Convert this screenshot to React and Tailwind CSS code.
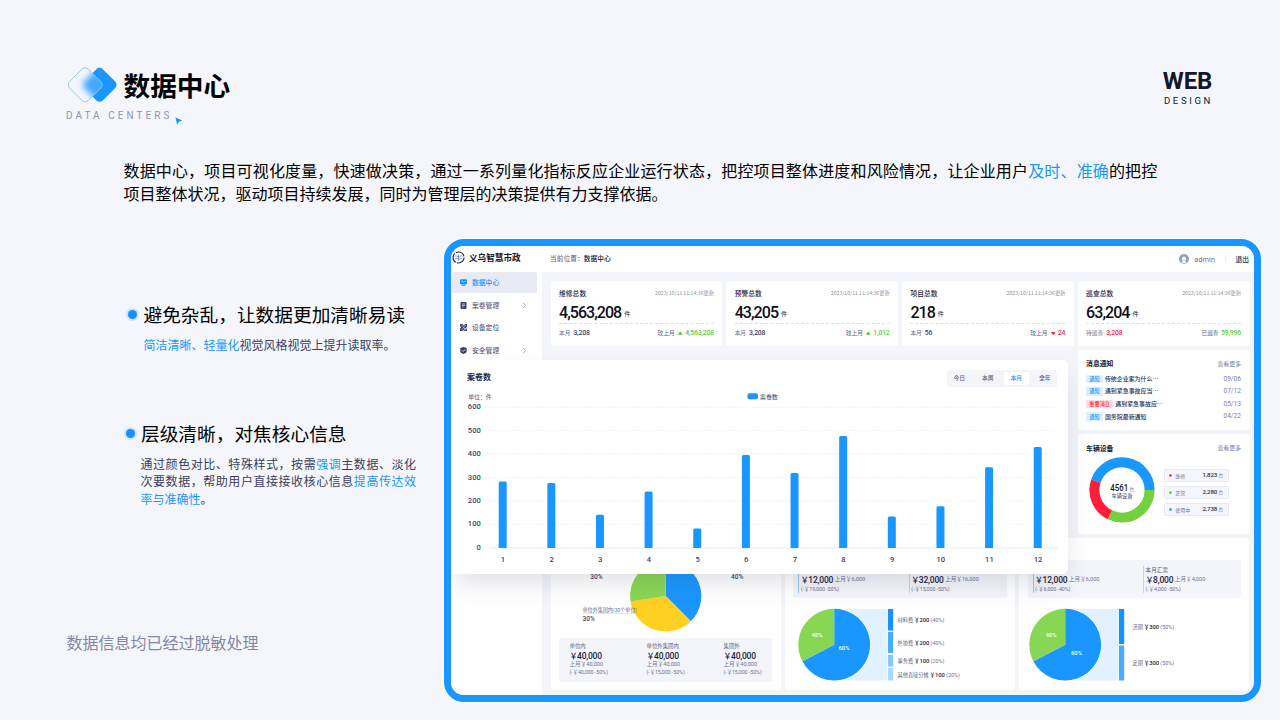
import React from "react";
import { ChevronRight } from "lucide-react";

const navItems = [
    { label: "数据中心", icon: "monitor", active: true },
    { label: "案卷管理", icon: "file", arrow: true },
    { label: "设备定位", icon: "device" },
    { label: "安全管理", icon: "shield", arrow: true },
];

const stats = [
    { title: "维修总数", value: "4,563,208", left: "本月", leftValue: "3,208", right: "较上月", rightValue: "4,563,208", trend: "up" },
    { title: "预警总数", value: "43,205", left: "本月", leftValue: "3,208", right: "较上月", rightValue: "1,012", trend: "up" },
    { title: "项目总数", value: "218", left: "本月", leftValue: "56", right: "较上月", rightValue: "24", trend: "down" },
    { title: "巡查总数", value: "63,204", left: "待巡查", leftValue: "3,208", right: "已巡查", rightValue: "59,996", alert: true },
];

const notices = [
    { tag: "通知", text: "传统企业家为什么⋯", date: "09/06" },
    { tag: "通知", text: "遇到紧急事故应当⋯", date: "07/12" },
    { tag: "重要消息", text: "遇到紧急事故应⋯", date: "05/13", urgent: true },
    { tag: "通知", text: "国务院最新通知", date: "04/22" },
];

const vehicles = [
    { label: "维修", value: "1,823", dot: "#ff1f3d" },
    { label: "正常", value: "2,280", dot: "#52c41a" },
    { label: "使用中", value: "2,738", dot: "#1890ff" },
];

const monthly = [283, 277, 141, 240, 82, 396, 319, 477, 134, 177, 344, 430];
const tabs = ["今日", "本周", "本月", "全年"];

const unitTotals = [
    { label: "单位内", diff: "(-￥40,000 -50%)" },
    { label: "单位外集团内", diff: "(-￥15,000 -50%)" },
    { label: "集团外", diff: "(-￥15,000 -50%)" },
];

// Angles are in degrees, clockwise from 12 o'clock
function point(cx, cy, r, deg) {
    const a = ((deg - 90) * Math.PI) / 180;
    return `${(cx + r * Math.cos(a)).toFixed(2)} ${(cy + r * Math.sin(a)).toFixed(2)}`;
}

function slice(cx, cy, r, from, to) {
    return `M${cx} ${cy}L${point(cx, cy, r, from)}A${r} ${r} 0 ${to - from > 180 ? 1 : 0} 1 ${point(cx, cy, r, to)}Z`;
}

function arc(cx, cy, r, from, to) {
    return `M${point(cx, cy, r, from)}A${r} ${r} 0 ${to - from > 180 ? 1 : 0} 1 ${point(cx, cy, r, to)}`;
}

function BrandMark() {
    return (
        <svg width="52" height="38" viewBox="0 0 52 38">
            <defs>
                <clipPath id="front">
                    <rect x="5.900" y="5.500" width="26.600" height="26.600" rx="4.500" transform="rotate(45 19.200 18.800)" />
                </clipPath>
                <filter id="soft" x="-50%" y="-50%" width="200%" height="200%">
                    <feGaussianBlur stdDeviation="3" />
                </filter>
            </defs>
            <rect x="20.300" y="5.500" width="26.600" height="26.600" rx="4.500" transform="rotate(45 33.600 18.800)" fill="#1a96ff" />
            <g clipPath="url(#front)">
                <rect width="40" height="38" fill="#f4f6fb" />
                <rect x="20.300" y="5.500" width="26.600" height="26.600" rx="4.500" transform="rotate(45 33.600 18.800)" fill="#44a9ff" filter="url(#soft)" />
            </g>
            <rect x="5.900" y="5.500" width="26.600" height="26.600" rx="4.500" transform="rotate(45 19.200 18.800)" fill="none" stroke="#7cc3ff" strokeWidth="0.8" />
        </svg>
    );
}

function NavIcon({ name }) {
    return (
        <svg width="7" height="7" viewBox="0 0 14 14" fill="#3d426b">
            {name === "monitor" && (
                <g fill="#1890ff">
                    <rect x="0" y="0.5" width="14" height="10" rx="2" />
                    <rect x="3" y="11" width="8" height="2.5" rx="1" />
                    <path d="M3 5l2-1.500 2 3.500 2-2h2" stroke="#fff" strokeWidth="1.200" fill="none" />
                </g>
            )}
            {name === "file" && (
                <g>
                    <rect x="1" y="0" width="12" height="14" rx="1.500" />
                    <path d="M4 4h6M4 7h6M4 10h3" stroke="#fff" strokeWidth="1.200" />
                </g>
            )}
            {name === "device" && (
                <g>
                    <path d="M0 0h5l3 4 2-4h4v5l-2 3 2 3v3H9L7 12l-2 2H0V9l2-2-2-3z" />
                    <path d="M2 1l10 12M12 2L3 12" stroke="#fff" strokeWidth="0.900" />
                    <circle cx="10" cy="9.500" r="1.500" fill="#fff" />
                </g>
            )}
            {name === "shield" && (
                <g>
                    <path d="M7 0l6.500 2v6c0 3-3 5-6.500 6C3.500 13 .5 11 .5 8V2z" />
                    <path d="M4 6.500l2.500 2.500L10.500 5" stroke="#fff" strokeWidth="1.500" fill="none" />
                </g>
            )}
        </svg>
    );
}

function Sidebar() {
    return (
        <aside className="w-[91px] shrink-0 bg-white">
            <div className="flex h-[26px] items-center gap-[4px] pb-[3px] pl-[1px]">
                <svg width="13" height="13" viewBox="0 0 26 26" fill="none" stroke="#1d2560">
                    <circle cx="13" cy="13" r="11" strokeWidth="2.300" strokeDasharray="20 2.500" />
                    <path d="M5 11c4-4 7 3 11 0 2-2 4-2 5 0M5 16c5-3 8 2 15-1" stroke="#5b78b8" strokeWidth="1.500" />
                    <path d="M13 7v12" stroke="#6e7ba8" strokeWidth="1.500" />
                </svg>
                <span className="text-[8.6px] font-bold leading-none text-[#14162b]">义乌智慧市政</span>
            </div>
            <nav className="flex flex-col gap-[2.2px] pl-px pr-[5px]">
                {navItems.map((item) => (
                    <div
                        key={item.label}
                        className={
                            item.active
                                ? "flex h-[20.6px] items-center rounded-[2.5px] bg-[#e8eaf4] px-[8px] text-[#1890ff]"
                                : "flex h-[20.6px] items-center px-[8px] text-[#5a5e80]"
                        }
                    >
                        <NavIcon name={item.icon} />
                        <span className="ml-[5px] flex-1 text-[6.8px] font-medium leading-none">{item.label}</span>
                        {item.arrow && <ChevronRight size={9} strokeWidth={2} className="text-[#8c90ac]" />}
                    </div>
                ))}
            </nav>
        </aside>
    );
}

function TopBar() {
    return (
        <header className="flex h-[26px] shrink-0 items-center bg-white pb-[2px] pl-[8px] pr-[5px] text-[6.75px] leading-none">
            <span className="text-[#5a5e80]">当前位置：</span>
            <span className="flex-1 font-medium text-[#14162b]">数据中心</span>
            <svg width="10" height="10" viewBox="0 0 20 20" className="mt-px">
                <circle cx="10" cy="10" r="10" fill="#91a3bf" />
                <path d="M5 18.500c0-2.500 1-3.500 3-4.500C5 12 5.500 5 10 5s5 7 2 9c2 1 3 2 3 4.500z" fill="#f4f6fb" />
            </svg>
            <span className="ml-[5px] mt-[2px] font-['Open_Sans'] text-[7px] text-[#5a5e80]">admin</span>
            <span className="ml-[10px] mt-px h-[7px] w-px bg-[#eceef5]" />
            <span className="ml-[9.5px] mt-[2px] font-medium text-[#2c3052]">退出</span>
        </header>
    );
}

function StatCard({ stat }) {
    const down = stat.trend === "down";
    return (
        <div className="h-[65px] rounded-[2.5px] bg-white px-[8.5px] pt-[8px] leading-none">
            <div className="flex h-[8px] items-center justify-between">
                <span className="text-[6.8px] font-medium text-[#23263f]">{stat.title}</span>
                <span className="text-[5.2px] text-[#8c90ac]">2023/10/11 11:14:36更新</span>
            </div>
            <div className="mt-[8px] flex h-[15px] items-center">
                <span className="font-['Roboto'] text-[16px] font-medium tracking-[-0.95px] text-[#0d0f1f]">{stat.value}</span>
                <span className="ml-[3px] mt-[3px] text-[6.2px] text-[#23263f]">件</span>
            </div>
            <div className="mt-[3px] border-t border-dashed border-[#dcdeea]" />
            <div className="mt-[5px] flex h-[8px] items-center text-[5.7px]">
                <span className="text-[#6d7194]">{stat.left}</span>
                <span
                    className={
                        stat.alert
                            ? "ml-[3px] flex-1 font-['Roboto'] text-[6.8px] font-medium tracking-[-0.15px] text-[#ff1f3d]"
                            : "ml-[3px] flex-1 font-['Roboto'] text-[6.8px] font-medium tracking-[-0.15px] text-[#3d426b]"
                    }
                >
                    {stat.leftValue}
                </span>
                <span className="text-[#5a5e80]">{stat.right}</span>
                {stat.trend && (
                    <svg width="4.500" height="3" viewBox="0 0 9 6" className="ml-[3.5px]">
                        <path d={down ? "M0 0h9L5.500 5.500h-2z" : "M0 5.500h9L5.500 0h-2z"} fill={down ? "#ff1f3d" : "#52c41a"} />
                    </svg>
                )}
                <span
                    className={
                        down
                            ? "ml-[2.5px] font-['Roboto'] text-[6.8px] font-medium tracking-[-0.15px] text-[#ff1f3d]"
                            : "ml-[2.5px] font-['Roboto'] text-[6.8px] font-medium tracking-[-0.15px] text-[#5bd12a]"
                    }
                >
                    {stat.rightValue}
                </span>
            </div>
        </div>
    );
}

function NoticeCard() {
    return (
        <div className="h-[80px] rounded-[2.5px] bg-white px-[8.5px] pt-[9px] leading-none">
            <div className="flex h-[9px] items-center justify-between">
                <span className="text-[6.8px] font-bold text-[#14162b]">消息通知</span>
                <span className="text-[5.9px] text-[#7d81a0]">查看更多</span>
            </div>
            <div className="mt-[4.500px] flex flex-col">
                {notices.map((n) => (
                    <div key={n.date} className="flex h-[12.65px] items-center">
                        <span
                            className={
                                n.urgent
                                    ? "flex h-[8.5px] items-center rounded-[1.5px] bg-[#ffdfe3] px-[3.2px] pb-[0.8px] text-[5.2px] font-medium text-[#ff1f3d]"
                                    : "flex h-[8.5px] items-center rounded-[1.5px] bg-[#dcf0ff] px-[3.2px] pb-[0.8px] text-[5.2px] font-medium text-[#1890ff]"
                            }
                        >
                            {n.tag}
                        </span>
                        <span className="ml-[2px] flex-1 text-[5.95px] font-medium text-[#2c3052]">{n.text}</span>
                        <span className="font-['Roboto'] text-[6.6px] text-[#7d81a0]">{n.date}</span>
                    </div>
                ))}
            </div>
        </div>
    );
}

function VehicleCard() {
    return (
        <div className="h-[100px] rounded-[2.5px] bg-white px-[8.5px] pt-[9.500px] leading-none">
            <div className="flex h-[9px] items-center justify-between">
                <span className="text-[6.8px] font-bold text-[#14162b]">车辆设备</span>
                <span className="text-[5.9px] text-[#7d81a0]">查看更多</span>
            </div>
            <div className="mt-[4.500px] flex items-center pl-[3px]">
                <svg width="66" height="66" viewBox="0 0 66 66">
                    <g fill="none" strokeWidth="10">
                        <path d={arc(33, 33, 27.6, 289, 450)} stroke="#1a96ff" />
                        <path d={arc(33, 33, 27.6, 90, 206)} stroke="#73d13d" />
                        <path d={arc(33, 33, 27.6, 206, 289)} stroke="#ff1f3d" />
                    </g>
                    <text x="21.300" y="33.700" fontSize="8.600" fontWeight="500" fill="#14162b" className="font-['Roboto']" textLength="18" lengthAdjust="spacingAndGlyphs">4561</text>
                    <text x="40.500" y="33.500" fontSize="4.500" fill="#6d7194">台</text>
                    <text x="33" y="40.500" fontSize="5.200" fill="#3d426b" textAnchor="middle">车辆设备</text>
                </svg>
                <div className="ml-[8.500px] mt-[4px] flex flex-col gap-[4px]">
                    {vehicles.map((v) => (
                        <div key={v.label} className="flex h-[13px] w-[65px] items-center rounded-[1.5px] border border-[#e6e8f3] bg-[#f4f6fb] px-[4.6px] text-[5px]">
                            <svg width="3" height="3" viewBox="0 0 3 3">
                                <circle cx="1.500" cy="1.500" r="1.300" fill={v.dot} />
                            </svg>
                            <span className="ml-[3px] flex-1 text-[#6d7194]">{v.label}</span>
                            <span className="font-['Roboto'] text-[6.1px] font-medium tracking-[-0.15px] text-[#2c3052]">{v.value}</span>
                            <span className="ml-[1.5px] text-[4.5px] text-[#6d7194]">台</span>
                        </div>
                    ))}
                </div>
            </div>
        </div>
    );
}

function Money({ value }) {
    return (
        <span className="flex h-[10px] items-center whitespace-nowrap text-[8px] font-medium leading-none text-[#1d2040]">
            <span className="w-[7.5px] shrink-0">￥</span>
            <span className="font-['Roboto'] text-[8.5px] tracking-[-0.2px]">{value}</span>
        </span>
    );
}

function UnitCard() {
    return (
        <div className="flex h-[152px] w-[230.3px] flex-col rounded-[2.5px] bg-white px-[8.5px] pb-[8px]">
            <svg width="213" height="100" viewBox="559 538 213 100">
                <path d={slice(665.7, 596, 35.6, 0, 135)} fill="#1a96ff" />
                <path d={slice(665.7, 596, 35.6, 135, 261)} fill="#ffcf21" />
                <path d={slice(665.7, 596, 35.6, 261, 360)} fill="#88d754" />
                <g className="font-['Roboto']" fontSize="6.500" fontWeight="500" fill="#3d426b">
                    <text x="590.300" y="578.800">30%</text>
                    <text x="731" y="578.800">40%</text>
                    <text x="582.600" y="621.300">30%</text>
                </g>
                <text x="582.500" y="612" fontSize="5.200" fill="#6d7194" textLength="54.500">单位外集团内(30个单位)</text>
                <path d="M582.500 613.400h55" stroke="#f3d56a" strokeWidth="0.600" />
            </svg>
            <div className="flex h-[44px] shrink-0 rounded-[2px] bg-[#f4f5fa] pl-[10.5px] leading-none text-[#6d7194]">
                {unitTotals.map((u) => (
                    <div key={u.label} className="flex w-[77px] shrink-0 flex-col whitespace-nowrap pt-[5px]">
                        <div className="flex h-[8px] items-center text-[5.4px] text-[#5a5e80]">{u.label}</div>
                        <Money value="40,000" />
                        <div className="flex h-[8px] items-center text-[5.6px]">
                            上月￥<span className="font-['Roboto']">40,000</span>
                        </div>
                        <div className="flex h-[8px] items-center font-['Roboto','Noto_Sans_CJK_SC'] text-[5.3px] tracking-[-0.05px]">{u.diff}</div>
                    </div>
                ))}
            </div>
        </div>
    );
}

function CostItem({ title, value, last, diff, border }) {
    return (
        <div className={`flex h-[27px] w-[110.5px] shrink-0 flex-col whitespace-nowrap border-l pl-[1.5px] leading-none ${border}`}>
            <div className="flex h-[9px] items-center text-[5.6px] text-[#5a5e80]">{title}</div>
            <div className="flex h-[10.500px] items-center">
                <Money value={value} />
                <span className="ml-[1.500px] flex items-center text-[5.600px] text-[#6d7194]">
                    上月￥<span className="font-['Roboto']">{last}</span>
                </span>
            </div>
            <div className="flex h-[7.500px] items-center font-['Roboto','Noto_Sans_CJK_SC'] text-[5.3px] tracking-[-0.05px] text-[#6d7194]">{diff}</div>
        </div>
    );
}

function CostCard({ items, segments, rows, cx, innerLabels }) {
    return (
        <div className="flex h-[152px] w-[230.3px] flex-col rounded-[2.5px] bg-white px-[8.5px] pt-[22px]">
            <div className="flex h-[38px] shrink-0 rounded-[2px] bg-[#f4f5fa] pl-[5px] pt-[6px]">
                {items.map((item) => (
                    <CostItem key={item.title} {...item} />
                ))}
            </div>
            <svg width="213" height="84" viewBox="0 0 213 84">
                <path d={`M${cx} 10.900h52.700V82.500H${cx}z`} fill="#e1f1ff" />
                <circle cx={cx} cy="46.700" r="36.700" fill="#fff" />
                <path d={slice(cx, 46.7, 35.9, 0, 242.5)} fill="#1a96ff" />
                <path d={slice(cx, 46.7, 35.9, 242.5, 360)} fill="#88d754" />
                {segments.map((s) => (
                    <rect key={s.y} x={cx + 53.7} y={s.y} width="5.300" height={s.h} fill={s.fill} />
                ))}
                <g className="font-['Roboto']" fontSize="5.800" fontWeight="500" fill="#fff" textAnchor="middle">
                    <text x={innerLabels[0].x} y={innerLabels[0].y}>40%</text>
                    <text x={innerLabels[1].x} y={innerLabels[1].y}>60%</text>
                </g>
                <g fontSize="5.200" fill="#5a5e80">
                    {rows.map((r) => (
                        <text key={r.label} x="104.500" y={r.y}>
                            {r.label} <tspan fontWeight="500" fill="#23263f">￥<tspan className="font-['Roboto']" fontSize="5.800">{r.value}</tspan></tspan>{" "}
                            <tspan className="font-['Roboto']" fontSize="5.400" fill="#6d7194">({r.pct})</tspan>
                        </text>
                    ))}
                </g>
            </svg>
        </div>
    );
}

function CaseChart() {
    const base = 187.3;
    const step = 0.2343;
    return (
        <section className="absolute left-0 top-[114px] h-[214px] w-[616.5px] rounded-r-[6px] bg-white pl-[6px] shadow-[0_12px_26px_-4px_rgba(60,64,90,0.17)]">
            <div className="flex items-start justify-between pl-[10px] pr-[10.5px] pt-[10px]">
                <h3 className="pt-[2.500px] text-[8px] font-bold leading-none text-[#23263f]">案卷数</h3>
                <div className="flex h-[16.500px] w-[110px] items-center justify-center rounded-[2px] bg-[#f4f5fa]">
                    {tabs.map((tab) => (
                        <span key={tab} className="flex w-[28.5px] shrink-0 justify-center">
                            <span
                                className={
                                    tab === "本月"
                                        ? "flex h-[13px] w-[25px] items-center justify-center rounded-[1.5px] bg-white text-[5.8px] font-medium leading-none text-[#1890ff]"
                                        : "flex h-[13px] w-[25px] items-center justify-center text-[5.8px] font-medium leading-none text-[#5a5e80]"
                                }
                            >
                                {tab}
                            </span>
                        </span>
                    ))}
                </div>
            </div>
            <svg width="610" height="187" viewBox="0 26.500 610 187">
                <text x="11.200" y="38" fontSize="5.900" fill="#5a5e80">单位：件</text>
                <rect x="290.500" y="32.800" width="10.500" height="6" rx="2" fill="#1a96ff" />
                <text x="303" y="38" fontSize="5.900" fill="#3d426b">案卷数</text>
                {[600, 500, 400, 300, 200, 100].map((v) => (
                    <path key={v} d={`M28 ${base - v * step}h570`} stroke="#eceef4" strokeWidth="0.700" strokeDasharray="2 1" />
                ))}
                <path d={`M32 ${base + 0.2}h569`} stroke="#e6e8f0" />
                <g className="font-['Roboto']" fontSize="7.600" fontWeight="500" fill="#3d426b">
                    {[600, 500, 400, 300, 200, 100, 0].map((v) => (
                        <text key={v} x="23.800" y={base - v * step + 2} textAnchor="end">{v}</text>
                    ))}
                    {monthly.map((v, i) => (
                        <text key={i} x={46 + i * 48.64} y="201.500" textAnchor="middle">{i + 1}</text>
                    ))}
                </g>
                {monthly.map((v, i) => {
                    const x = 41.7 + i * 48.64;
                    const top = base - v * step;
                    return (
                        <path key={i} d={`M${x} ${base + 0.2}V${top + 1.5}q0 -1.5 1.5 -1.5h5q1.5 0 1.5 1.5V${base + 0.2}z`} fill="#1a96ff" />
                    );
                })}
            </svg>
        </section>
    );
}

function Dashboard() {
    return (
        <div className="relative flex h-[463px] w-[817px] shrink-0 overflow-hidden rounded-[20px] border-[7px] border-[#1a96ff] bg-[#f4f5fa] ring-1 ring-white">
            <Sidebar />
            <div className="flex min-w-0 flex-1 flex-col">
                <TopBar />
                <div className="flex flex-col gap-[4px] pl-[8.5px] pt-[9px]">
                    <div className="grid w-[699px] grid-cols-4 gap-[3.8px]">
                        {stats.map((stat) => (
                            <StatCard key={stat.title} stat={stat} />
                        ))}
                    </div>
                    <div className="flex w-[699px] justify-end">
                        <div className="flex w-[171.9px] flex-col gap-[4px]">
                            <NoticeCard />
                            <VehicleCard />
                        </div>
                    </div>
                    <div className="flex gap-[4px]">
                        <UnitCard />
                        <CostCard
                            items={[
                                { title: "本月支出", value: "12,000", last: "6,000", diff: "(-￥19,000 -50%)", border: "border-[#91caff]" },
                                { title: "本月收入", value: "32,000", last: "16,000", diff: "(-￥15,000 -50%)", border: "border-[#b7eb8f]" },
                            ]}
                            segments={[
                                { y: 11, h: 21.5, fill: "#1890ff" },
                                { y: 34, h: 21, fill: "#4aacff" },
                                { y: 57, h: 11.5, fill: "#85c8ff" },
                                { y: 70, h: 12.5, fill: "#a8daff" },
                            ]}
                            rows={[
                                { label: "材料费", value: "200", pct: "40%", y: 24 },
                                { label: "外协费", value: "200", pct: "40%", y: 47 },
                                { label: "事务费", value: "100", pct: "20%", y: 65 },
                                { label: "其他直接分摊", value: "100", pct: "20%", y: 78.5 },
                            ]}
                            cx={41.2}
                            innerLabels={[{ x: 24, y: 38.5 }, { x: 51, y: 51.5 }]}
                        />
                        <CostCard
                            items={[
                                { title: "本月汇款", value: "12,000", last: "6,000", diff: "(-￥6,000 -40%)", border: "border-[#91caff]" },
                                { title: "本月汇票", value: "8,000", last: "4,000", diff: "(-￥4,000 -50%)", border: "border-[#b7eb8f]" },
                            ]}
                            segments={[
                                { y: 11, h: 35, fill: "#1890ff" },
                                { y: 47.5, h: 35, fill: "#4aacff" },
                            ]}
                            rows={[
                                { label: "活期", value: "300", pct: "50%", y: 30.5 },
                                { label: "定期", value: "300", pct: "50%", y: 67 },
                            ]}
                            cx={37.2}
                            innerLabels={[{ x: 23, y: 38.5 }, { x: 48.5, y: 56.5 }]}
                        />
                    </div>
                </div>
            </div>
            <CaseChart />
        </div>
    );
}

function Bullet() {
    return (
        <span className="flex h-[13px] w-[13px] shrink-0 items-center justify-center rounded-full bg-[#c9e4fd]">
            <span className="h-[9px] w-[9px] rounded-full bg-[#1a90ff]" />
        </span>
    );
}

function App() {
    return (
        <div className="flex h-[720px] w-[1280px] flex-col overflow-hidden bg-[#f4f6fb] font-['Noto_Sans_CJK_SC',sans-serif] text-black">
            <header className="flex h-[159px] items-start justify-between pl-[66px] pr-[67px] pt-[66px]">
                <div>
                    <div className="flex h-[38px] items-center gap-[5.500px]">
                        <BrandMark />
                        <h1 className="pt-px text-[26.7px] font-bold leading-none">数据中心</h1>
                    </div>
                    <div className="flex h-[22px] items-start">
                        <span className="pt-[6.500px] font-['Roboto'] text-[10px] leading-none tracking-[3.05px] text-[#9294ab]">DATA CENTERS</span>
                        <svg width="8" height="8" viewBox="0 0 16 16" className="ml-[2.5px] mt-[12.5px]">
                            <path d="M1 1l13.500 6-6.500 2.500L4 15z" fill="#1a96ff" />
                        </svg>
                    </div>
                </div>
                <div className="flex flex-col items-center font-['Roboto'] text-[#14162b]">
                    <span className="pt-[3px] text-[24px] font-bold leading-none tracking-[-0.2px]">WEB</span>
                    <span className="mt-[3px] pl-[2px] text-[9.6px] leading-none tracking-[2.6px]">DESIGN</span>
                </div>
            </header>

            <p className="h-[80px] whitespace-nowrap pl-[123.500px] text-[16px] leading-[23.200px]">
                <span className="tracking-[0.155px]">
                    数据中心，项目可视化度量，快速做决策，通过一系列量化指标反应企业运行状态，把控项目整体进度和风险情况，让企业用户
                    <span className="text-[#1a96ff]">及时、准确</span>的把控
                </span>
                <br />
                项目整体状况，驱动项目持续发展，同时为管理层的决策提供有力支撑依据。
            </p>

            <main className="flex">
                <div className="flex w-[444px] shrink-0 flex-col whitespace-nowrap">
                    <section className="h-[120px] pl-[126px] pt-[65px]">
                        <div className="flex h-[20px] items-center gap-[4.500px]">
                            <Bullet />
                            <h2 className="text-[18.7px] leading-none">避免杂乱，让数据更加清晰易读</h2>
                        </div>
                        <p className="mt-[11.500px] pl-[17.500px] text-[12px] leading-[18px] text-[#3a3d60]">
                            <span className="text-[#1a96ff]">简洁清晰、轻量化</span>视觉风格视觉上提升读取率。
                        </p>
                    </section>
                    <section className="h-[268px] pl-[123.500px] pt-[64.500px]">
                        <div className="flex h-[20px] items-center gap-[4.500px]">
                            <Bullet />
                            <h2 className="text-[18.7px] leading-none">层级清晰，对焦核心信息</h2>
                        </div>
                        <p className="mt-[11.500px] pl-[17px] text-[12px] leading-[17.400px] tracking-[0.55px] text-[#3a3d60]">
                            通过颜色对比、特殊样式，按需<span className="text-[#1a96ff]">强调</span>主数据、淡化
                            <br />
                            次要数据，帮助用户直接接收核心信息<span className="text-[#1a96ff]">提高传达效</span>
                            <br />
                            <span className="tracking-normal"><span className="text-[#1a96ff]">率与准确性</span>。</span>
                        </p>
                    </section>
                    <footer className="pl-[66.500px] pt-[7px] text-[16px] leading-[16px] text-[#8486a6]">数据信息均已经过脱敏处理</footer>
                </div>
                <Dashboard />
            </main>
        </div>
    );
}

export default App;
